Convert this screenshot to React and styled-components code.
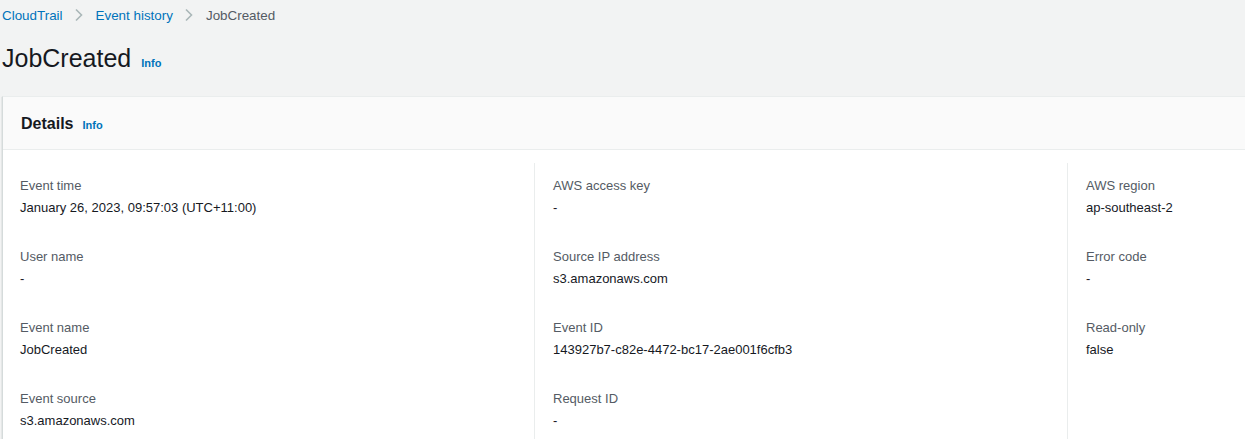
import React from "react";
import styled, { createGlobalStyle } from "styled-components";

const GlobalStyle = createGlobalStyle`
  body {
    margin: 0;
    background: #f2f3f3;
    font-family: "Liberation Sans", Arial, sans-serif;
    color: #16191f;
    overflow: hidden;
  }
`;

const Page = styled.div`
  padding: 0 0 0 2px;
  width: 1700px;
`;

const Breadcrumbs = styled.nav`
  display: flex;
  align-items: center;
  height: 30px;
  font-size: 13.4px;
`;

const Crumb = styled.a`
  color: ${(p) => (p.current ? "#545b64" : "#0073bb")};
  text-decoration: none;
`;

const Chevron = styled.span`
  display: inline-flex;
  margin: 0 12px 0 11px;
  color: #aab7b8;
`;

const TitleRow = styled.div`
  display: flex;
  align-items: baseline;
  gap: 10px;
  height: 66px;
  padding-top: 12px;
  box-sizing: border-box;
`;

const Title = styled.h1`
  margin: 0;
  font-size: 25px;
  font-weight: 400;
  line-height: 32px;
`;

const InfoLink = styled.a`
  color: #0073bb;
  font-size: 11px;
  font-weight: 700;
`;

const Container = styled.section`
  background: #fff;
  border-left: 1px solid #d5dbdb;
  border-top: 1px solid #eaeded;
  box-shadow: 0 1px 1px 0 rgba(0, 28, 36, 0.3);
`;

const Header = styled.header`
  display: flex;
  align-items: baseline;
  gap: 9px;
  height: 53px;
  padding: 16px 18px 0;
  box-sizing: border-box;
  background: #fafafa;
  border-bottom: 1px solid #eaeded;
`;

const HeaderTitle = styled.h2`
  margin: 0;
  font-size: 16px;
  font-weight: 700;
  line-height: 22px;
`;

const Columns = styled.div`
  display: grid;
  grid-template-columns: 531px 533px 533px;
  padding-top: 13px;
`;

const Column = styled.div`
  padding: 14px 0 0 ${(p) => (p.first ? "17px" : "18px")};
  border-left: ${(p) => (p.first ? "none" : "1px solid #eaeded")};
  display: flex;
  flex-direction: column;
  gap: 32px;
  height: 320px;
`;

const Field = styled.div`
  display: flex;
  flex-direction: column;
  gap: 5px;
`;

const Label = styled.div`
  color: #545b64;
  font-size: 13px;
  line-height: 17px;
`;

const Value = styled.div`
  color: #16191f;
  font-size: 13px;
  line-height: 17px;
`;

const ChevronIcon = () => (
  <svg width="10" height="14" viewBox="0 0 10 14" fill="none">
    <path d="M2 1.5 L7.5 7 L2 12.5" stroke="currentColor" strokeWidth="1.6" />
  </svg>
);

const columns = [
  [
    ["Event time", "January 26, 2023, 09:57:03 (UTC+11:00)"],
    ["User name", "-"],
    ["Event name", "JobCreated"],
    ["Event source", "s3.amazonaws.com"],
  ],
  [
    ["AWS access key", "-"],
    ["Source IP address", "s3.amazonaws.com"],
    ["Event ID", "143927b7-c82e-4472-bc17-2ae001f6cfb3"],
    ["Request ID", "-"],
  ],
  [
    ["AWS region", "ap-southeast-2"],
    ["Error code", "-"],
    ["Read-only", "false"],
  ],
];

export default function App() {
  return (
    <>
      <GlobalStyle />
      <Page>
        <Breadcrumbs>
          <Crumb href="#">CloudTrail</Crumb>
          <Chevron><ChevronIcon /></Chevron>
          <Crumb href="#">Event history</Crumb>
          <Chevron><ChevronIcon /></Chevron>
          <Crumb current>JobCreated</Crumb>
        </Breadcrumbs>
        <TitleRow>
          <Title>JobCreated</Title>
          <InfoLink>Info</InfoLink>
        </TitleRow>
        <Container>
          <Header>
            <HeaderTitle>Details</HeaderTitle>
            <InfoLink>Info</InfoLink>
          </Header>
          <Columns>
            {columns.map((col, i) => (
              <Column key={i} first={i === 0}>
                {col.map(([label, value]) => (
                  <Field key={label}>
                    <Label>{label}</Label>
                    <Value>{value}</Value>
                  </Field>
                ))}
              </Column>
            ))}
          </Columns>
        </Container>
      </Page>
    </>
  );
}
